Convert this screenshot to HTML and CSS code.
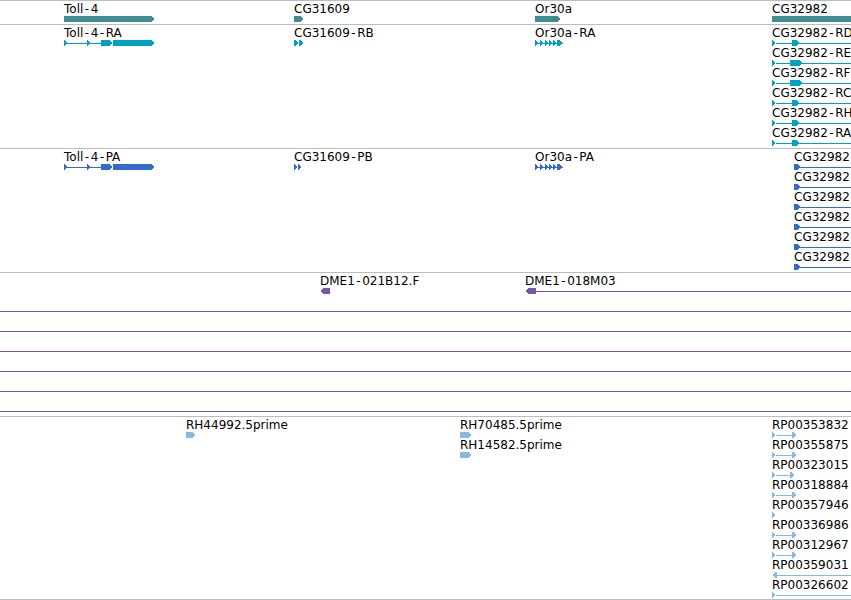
FILE: index.html
```html
<!DOCTYPE html>
<html lang="en">

<head>
    <meta charset="UTF-8">
    <meta name="viewport" content="width=device-width, initial-scale=1.0">
    <title>Genome Browser Tracks</title>
    <link rel="stylesheet" href="styles.css">
</head>

<body>
    <!-- one div per track, glyphs are drawn into an svg from the feature list -->
    <main class="browser" id="browser"></main>
    <script>
        const WIDTH = 851;

        const toll = [['line', 64, 101], ['box', 64, 67, 1], ['box', 87, 91, 1], ['box', 101, 113, 1], ['box', 113, 155, 1]];
        const or30 = [['line', 535, 563], ['box', 535, 539, 1], ['box', 540, 544, 1], ['box', 545, 549, 1], ['box', 549, 553, 1], ['box', 553, 557, 1], ['box', 557, 563, 1]];

        function cgTranscript(row, suffix, wide) {
            return {
                x: 772, row: row, label: 'CG32982-' + suffix,
                parts: [['line', 776, 860], ['box', 772, 776, 1], wide ? ['box', 790, 803, 1] : ['box', 792, 800, 1]]
            };
        }

        function cgProtein(row, suffix) {
            return { x: 794, row: row, label: 'CG32982-' + suffix, parts: [['line', 800, 860], ['box', 794, 801, 1]] };
        }

        function rp(row, label, parts) {
            return { x: 772, row: row, label: label, parts: parts };
        }

        const rpPair = [['line', 776, 793], ['box', 772, 776, 1], ['box', 792, 797, 1]];

        const tracks = [
            {
                height: 23, color: 'gene', features: [
                    { x: 64, label: 'Toll-4', parts: [['box', 64, 155, 1]] },
                    { x: 294, label: 'CG31609', parts: [['box', 294, 304, 1]] },
                    { x: 535, label: 'Or30a', parts: [['box', 535, 561, 1]] },
                    { x: 772, label: 'CG32982', parts: [['box', 772, 860, 0]] }
                ]
            },
            {
                height: 123, color: 'transcript', features: [
                    { x: 64, label: 'Toll-4-RA', parts: toll },
                    { x: 294, label: 'CG31609-RB', parts: [['box', 294, 299, 1], ['box', 299, 304, 1]] },
                    { x: 535, label: 'Or30a-RA', parts: or30 },
                    cgTranscript(0, 'RD'),
                    cgTranscript(1, 'RE', true),
                    cgTranscript(2, 'RF', true),
                    cgTranscript(3, 'RC'),
                    cgTranscript(4, 'RH'),
                    cgTranscript(5, 'RA')
                ]
            },
            {
                height: 123, color: 'protein', features: [
                    { x: 64, label: 'Toll-4-PA', parts: toll },
                    { x: 294, label: 'CG31609-PB', parts: [['box', 294, 298, 1], ['box', 298, 302, 1]] },
                    { x: 535, label: 'Or30a-PA', parts: or30 },
                    cgProtein(0, 'PD'),
                    cgProtein(1, 'PE'),
                    cgProtein(2, 'PF'),
                    cgProtein(3, 'PC'),
                    cgProtein(4, 'PH'),
                    cgProtein(5, 'PA')
                ]
            },
            {
                height: 143, color: 'est', features: [
                    { x: 320, label: 'DME1-021B12.F', parts: [['box', 320, 330, -1]] },
                    { x: 525, label: 'DME1-018M03', parts: [['line', 536, 860], ['box', 525, 536, -1]] },
                    { row: 1, parts: [['line', -10, 860]] },
                    { row: 2, parts: [['line', -10, 860]] },
                    { row: 3, parts: [['line', -10, 860]] },
                    { row: 4, parts: [['line', -10, 860]] },
                    { row: 5, parts: [['line', -10, 860]] },
                    { row: 6, parts: [['line', -10, 860]] }
                ]
            },
            {
                height: 182, color: 'read', features: [
                    { x: 186, label: 'RH44992.5prime', parts: [['box', 186, 196, 1]] },
                    { x: 460, label: 'RH70485.5prime', parts: [['box', 460, 472, 1]] },
                    { x: 460, row: 1, label: 'RH14582.5prime', parts: [['box', 460, 472, 1]] },
                    rp(0, 'RP00353832', rpPair),
                    rp(1, 'RP00355875', rpPair),
                    rp(2, 'RP00323015', [['line', 776, 791], ['box', 772, 776, 1], ['box', 790, 795, 1]]),
                    rp(3, 'RP00318884', rpPair),
                    rp(4, 'RP00357946', [['box', 772, 776, 1]]),
                    rp(5, 'RP00336986', rpPair),
                    rp(6, 'RP00312967', rpPair),
                    rp(7, 'RP00359031', [['line', 776, 860], ['box', 772, 777, -1]]),
                    rp(8, 'RP00326602', [['line', 776, 860], ['box', 772, 776, 1]])
                ]
            }
        ];

        function boxPoints(x1, x2, top, dir) {
            const h = 6;
            const tip = Math.min(4, x2 - x1);
            const bottom = top + h;
            const mid = top + h / 2;
            if (dir > 0) {
                return `${x1},${top} ${x2 - tip},${top} ${x2},${mid} ${x2 - tip},${bottom} ${x1},${bottom}`;
            }
            if (dir < 0) {
                return `${x1},${mid} ${x1 + tip},${top} ${x2},${top} ${x2},${bottom} ${x1 + tip},${bottom}`;
            }
            return `${x1},${top} ${x2},${top} ${x2},${bottom} ${x1},${bottom}`;
        }

        function labelText(label) {
            const bits = label.split('-');
            return bits[0] + bits.slice(1).map(s => `<tspan dx="1.5">-</tspan><tspan dx="1.5">${s}</tspan>`).join('');
        }

        function drawFeature(f) {
            const row = f.row || 0;
            const baseline = 12 + row * 20;
            const top = baseline + 3;
            let out = '';
            if (f.label) {
                out += `<text class="label" x="${f.x}" y="${baseline}">${labelText(f.label)}</text>`;
            }
            f.parts.forEach(p => {
                if (p[0] === 'line') {
                    out += `<rect class="intron" x="${p[1]}" y="${top + 3}" width="${p[2] - p[1]}" height="1"></rect>`;
                } else {
                    out += `<polygon class="exon" points="${boxPoints(p[1], p[2], top, p[3])}"></polygon>`;
                }
            });
            return out;
        }

        const browser = document.getElementById('browser');
        tracks.forEach(track => {
            const div = document.createElement('div');
            div.className = 'track ' + track.color;
            div.innerHTML = `<svg width="${WIDTH}" height="${track.height}" viewBox="0 0 ${WIDTH} ${track.height}">
                ${track.features.map(drawFeature).join('')}
            </svg>`;
            browser.appendChild(div);
        });
    </script>
</body>

</html>
```

FILE: styles.css
```css
body {
    margin: 0;
    padding: 0;
    background-color: #ffffff;
    font-family: "DejaVu Sans", Verdana, sans-serif;
    overflow: hidden;
}

.browser {
    width: 851px;
    display: flex;
    flex-direction: column;
}

.track {
    border-top: 1px solid #bdbdbd;
}

.track:last-child {
    border-bottom: 1px solid #bdbdbd;
}

.track svg {
    display: block;
    overflow: hidden;
}

.label {
    font-family: "DejaVu Sans", Verdana, sans-serif;
    font-size: 12px;
    fill: #000000;
}

.exon,
.intron {
    shape-rendering: crispEdges;
}

.gene .exon,
.gene .intron {
    fill: #408d91;
}

.transcript .exon,
.transcript .intron {
    fill: #00a1c3;
}

.protein .exon,
.protein .intron {
    fill: #326bcb;
}

.est .exon,
.est .intron {
    fill: #7656ab;
}

.read .exon,
.read .intron {
    fill: #88bae0;
}
```
